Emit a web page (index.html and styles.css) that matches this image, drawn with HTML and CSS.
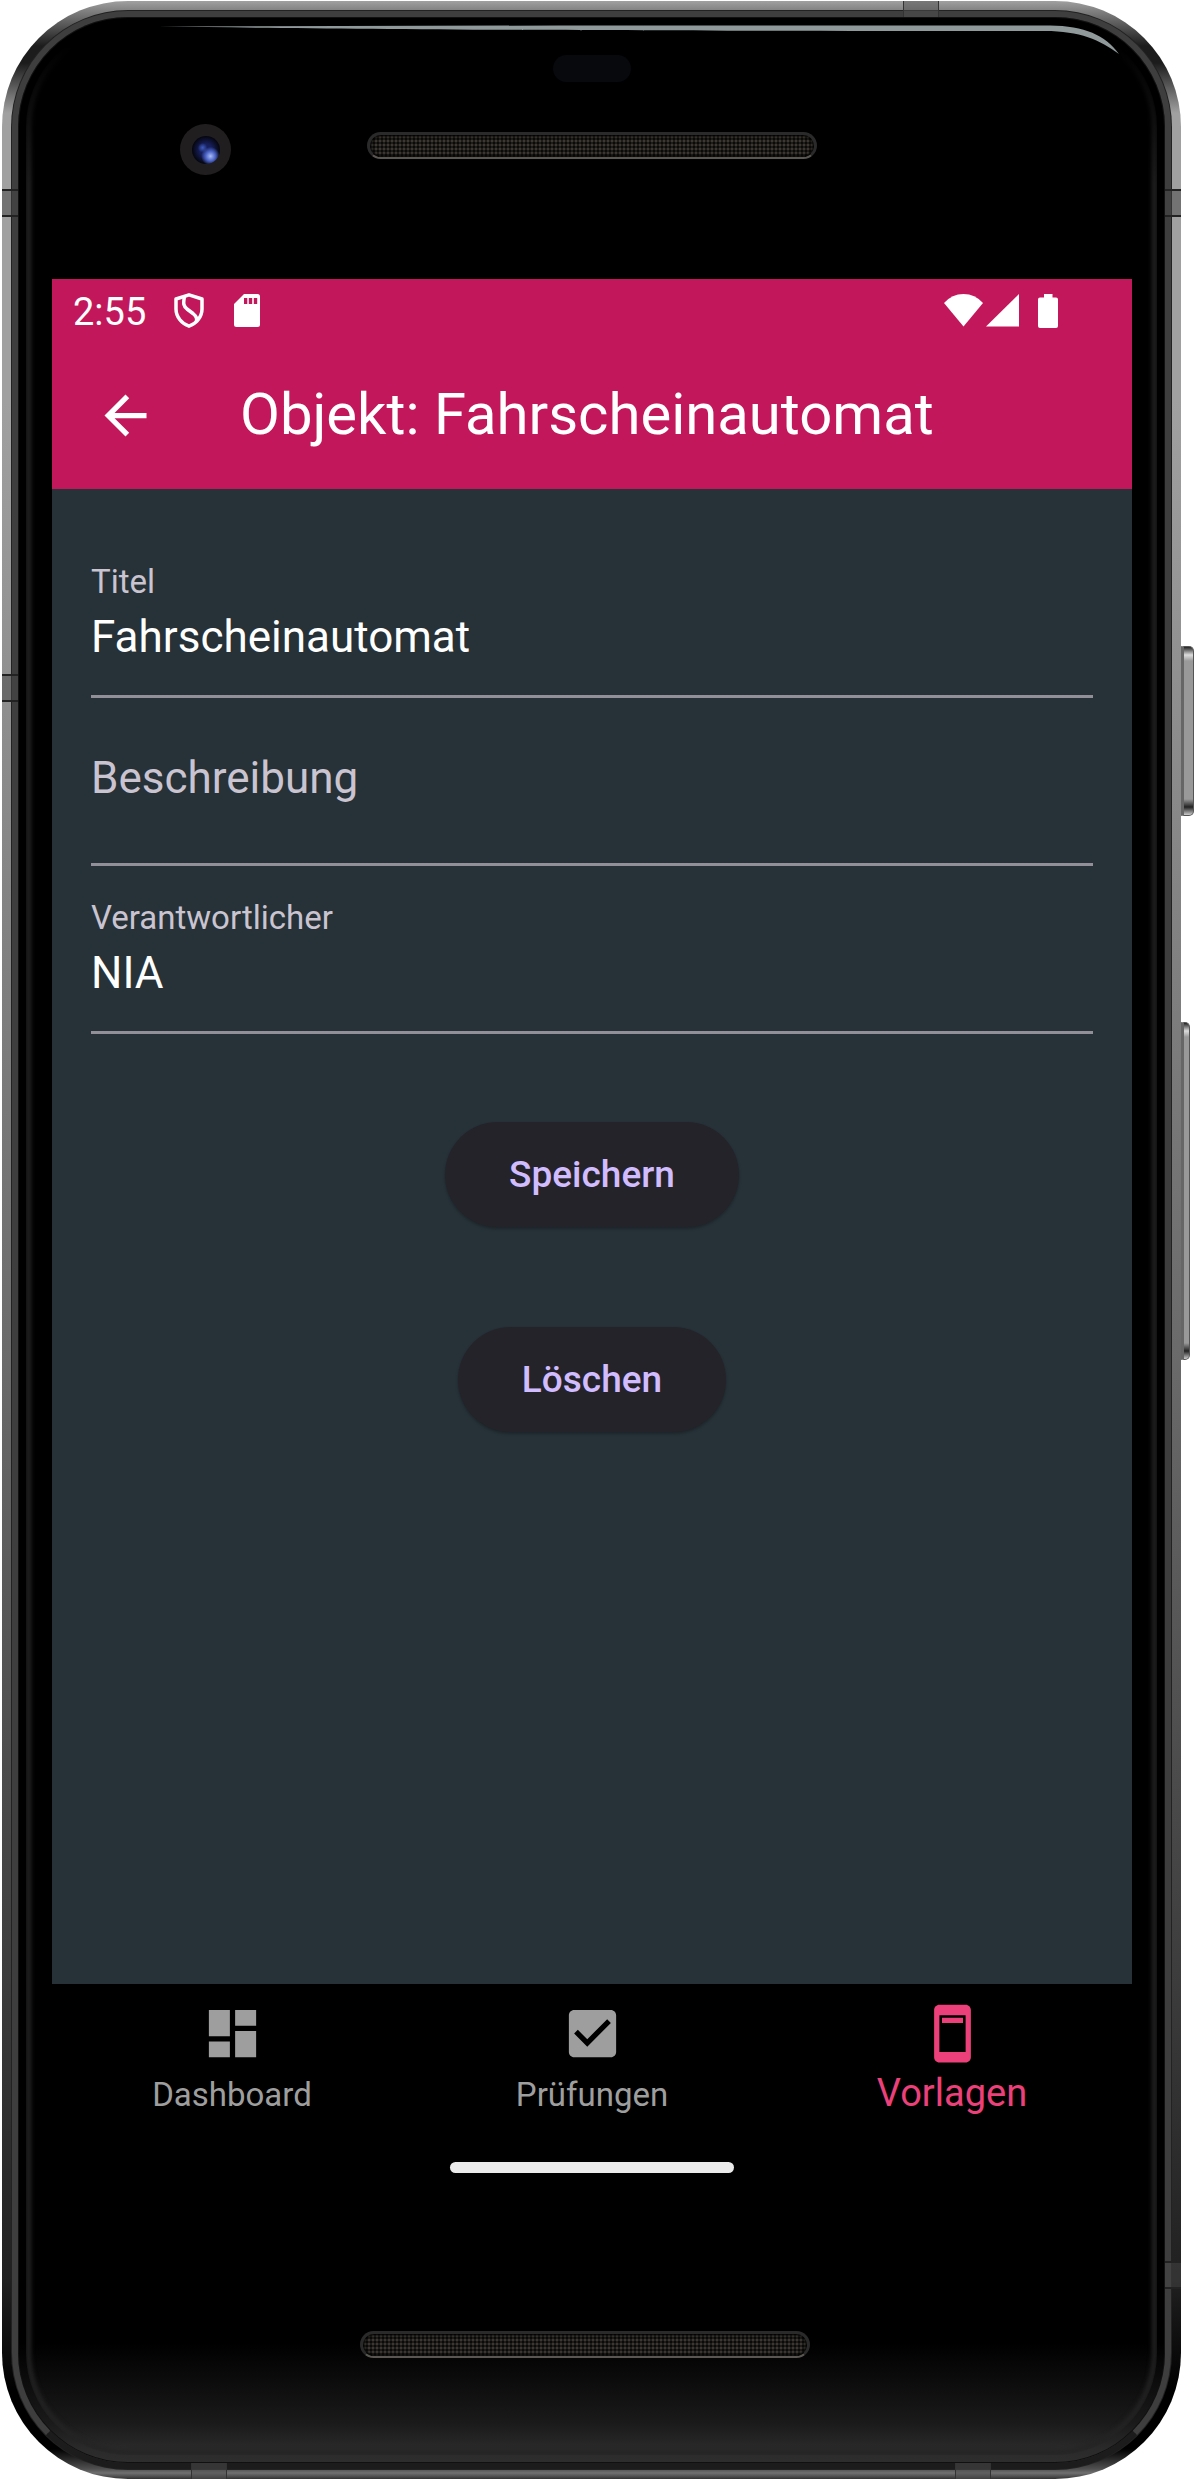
FILE: index.html
```html
<!DOCTYPE html>
<html lang="de">
<head>
  <meta charset="utf-8">
  <meta name="viewport" content="width=device-width, initial-scale=1">
  <title>Objekt: Fahrscheinautomat</title>
  <link rel="stylesheet" href="styles.css">
</head>
<body>
  <div class="phone">
    <span class="side-key side-key-power"></span>
    <span class="side-key side-key-volume"></span>
    <span class="seam seam-left seam-upper"></span>
    <span class="seam seam-left seam-middle"></span>
    <span class="seam seam-right seam-upper"></span>
    <span class="seam seam-right seam-lower"></span>
    <span class="seam-h seam-top"></span>
    <span class="seam-h seam-bottom-left"></span>
    <span class="seam-h seam-bottom-right"></span>

    <div class="glass">
      <svg class="shine" viewBox="0 0 959 30" preserveAspectRatio="none" aria-hidden="true">
        <path fill="#919a9b" d="M0 1.5L400 .5H890C925 1 945 10 959 29C940 15 920 6 885 6C400 6 200 4 0 1.5z"/>
      </svg>

      <div class="forehead">
        <span class="sensor"></span>
        <span class="camera"><span class="lens"></span></span>
        <span class="speaker"></span>
      </div>

      <div class="screen">
        <header class="top">
          <div class="status">
            <span class="clock">2:55</span>
            <svg class="shield" width="30" height="35" viewBox="0 0 30 35" fill="none" stroke="#fff" stroke-width="3.500" stroke-linejoin="round" aria-hidden="true">
              <path d="M15 1.800L28 6V16C28 24 22 31 15 33.200C8 31 2 24 2 16V6z"/>
              <path d="M10.500 3.500C9 11 9.500 13 13 16L19 20.500C22.500 23.500 23 25 22.500 29"/>
            </svg>
            <svg class="sd" width="26" height="33" viewBox="0 0 26 33" aria-hidden="true">
              <path fill="#fff" fill-rule="evenodd" d="M10 0H23.500A2.500 2.500 0 0 1 26 2.500V30.500A2.500 2.500 0 0 1 23.500 33H2.500A2.500 2.500 0 0 1 0 30.500V10zM10 4V10H13.300V4zM14.800 4V10H18.200V4zM19.800 4V10H23.200V4z"/>
            </svg>
            <div class="signals">
              <svg width="39" height="34" viewBox="0 0 39 34" aria-hidden="true"><path fill="#fff" d="M0 9Q8 0 19.500 0T39 9L19.500 32.500z"/></svg>
              <svg width="33" height="34" viewBox="0 0 33 34" aria-hidden="true"><path fill="#fff" d="M33 0V32.500H0z"/></svg>
              <svg class="battery" width="20" height="34" viewBox="0 0 20 34" aria-hidden="true"><path fill="#fff" d="M6 0H14.500V3.500H18A2 2 0 0 1 20 5.500V32A2 2 0 0 1 18 34H2A2 2 0 0 1 0 32V5.500A2 2 0 0 1 2 3.500H6z"/></svg>
            </div>
          </div>
          <div class="appbar">
            <button class="back" type="button" aria-label="Zurück">
              <svg width="63" height="63" viewBox="0 0 24 24" aria-hidden="true"><path fill="#fff" d="M20 11H7.830l5.590-5.590L12 4l-8 8 8 8 1.410-1.410L7.830 13H20v-2z"/></svg>
            </button>
            <h1 class="title">Objekt: Fahrscheinautomat</h1>
          </div>
        </header>

        <main class="content">
          <form class="form">
            <div class="field">
              <label class="label" for="titel">Titel</label>
              <input class="input" id="titel" type="text" value="Fahrscheinautomat">
            </div>
            <div class="field field-empty">
              <label class="label" for="beschreibung">Beschreibung</label>
              <input class="input" id="beschreibung" type="text">
            </div>
            <div class="field">
              <label class="label" for="verantwortlicher">Verantwortlicher</label>
              <input class="input" id="verantwortlicher" type="text" value="NIA">
            </div>
            <div class="actions">
              <button class="button" type="button">Speichern</button>
              <button class="button" type="button">Löschen</button>
            </div>
          </form>
        </main>

        <nav class="nav">
          <a class="tab" href="#dashboard">
            <svg width="63" height="63" viewBox="0 0 24 24" fill="currentColor" aria-hidden="true"><path d="M3 13h8V3H3v10zm0 8h8v-6H3v6zm10 0h8V11h-8v10zm0-18v6h8V3h-8z"/></svg>
            <span class="tab-label">Dashboard</span>
          </a>
          <a class="tab" href="#pruefungen">
            <svg width="63" height="63" viewBox="0 0 24 24" fill="currentColor" aria-hidden="true"><path d="M19 3H5c-1.110 0-2 .9-2 2v14c0 1.100.89 2 2 2h14c1.110 0 2-.9 2-2V5c0-1.100-.89-2-2-2zm-9 14l-5-5 1.410-1.410L10 14.170l7.590-7.590L19 8l-9 9z"/></svg>
            <span class="tab-label">Prüfungen</span>
          </a>
          <a class="tab tab-active" href="#vorlagen" aria-current="page">
            <svg width="63" height="63" viewBox="0 0 24 24" fill="currentColor" aria-hidden="true"><path d="M17 1H7c-1.100 0-2 .9-2 2v18c0 1.100.9 2 2 2h10c1.100 0 2-.9 2-2V3c0-1.100-.9-2-2-2zm0 18H7V5h10v14zM8 6h8v2H8z"/></svg>
            <span class="tab-label">Vorlagen</span>
          </a>
        </nav>
        <div class="gesture"><span class="gesture-bar"></span></div>
      </div>

      <div class="chin"><span class="speaker speaker-low"></span></div>
    </div>
  </div>
</body>
</html>
```

FILE: styles.css
```css
* {
  box-sizing: border-box;
}

body {
  margin: 0;
  background: #fff;
  font-family: Roboto, "Liberation Sans", sans-serif;
  display: flex;
  flex-direction: column;
  min-height: 100vh;
}

/* Device frame */
.phone {
  position: relative;
  flex: 1;
  display: flex;
  flex-direction: column;
  margin: 1px 13px 1px 2px;
  padding: 10px;
  border-radius: 126px;
  background: linear-gradient(180deg,
    #a0a0a0 0, #868686 8px, #1c1c1c 45px, #1c1c1c 62px, #a0a0a0 112px,
    #a0a0a0 400px, #8c8c8c 30%, #6a6a6a 55%, #3c3c3c 80%, #202020 92%,
    #000 calc(100% - 90px), #000 calc(100% - 30px), #505050 calc(100% - 10px), #707070 calc(100% - 6px), #333 100%);
}

.side-key {
  position: absolute;
  left: 100%;
  border-radius: 0 5px 5px 0;
  border: 1px solid #555;
  border-left: 3px solid #666;
  background: linear-gradient(180deg, #222 0, #ddd 8px, #999 14px, #999 calc(100% - 16px), #222 calc(100% - 8px), #ccc 100%);
}

.side-key-power {
  top: 645px;
  width: 13px;
  height: 170px;
}

.side-key-volume {
  top: 1021px;
  width: 9px;
  height: 338px;
}

.seam {
  position: absolute;
  width: 16px;
  height: 28px;
  background: rgba(70, 70, 70, 0.5);
  border: solid #222;
  border-width: 2px 0;
  z-index: 1;
}

.seam-left {
  left: 0;
}

.seam-right {
  right: 0;
}

.seam-upper {
  top: 188px;
}

.seam-middle {
  top: 673px;
}

.seam-lower {
  bottom: 190px;
}

.seam-h {
  position: absolute;
  width: 36px;
  height: 16px;
  background: rgba(80, 80, 80, 0.5);
  border: solid #333;
  border-width: 0 1px;
  z-index: 1;
}

.seam-top {
  top: 0;
  right: 242px;
}

.seam-bottom-left {
  bottom: 0;
  left: 189px;
}

.seam-bottom-right {
  bottom: 0;
  right: 190px;
}

.glass {
  position: relative;
  flex: 1;
  display: flex;
  flex-direction: column;
  padding: 0 33px 0 34px;
  border: 6px solid #3e3e3e;
  border-bottom-color: #1c1c1c;
  border-radius: 116px;
  background:
    linear-gradient(0deg, #2e2e2e 0, #2a2a2a 14px, #1a1a1a 40px, #101010 70px, transparent 120px),
    #000;
  box-shadow: 0 0 0 1px #222, inset 0 0 0 1px #111;
}

/* Soft reflection along the curved glass edge */
.glass::before {
  content: "";
  position: absolute;
  inset: 8px;
  border: 5px solid #242424;
  border-radius: 102px;
  filter: blur(2px);
  mask-image: linear-gradient(180deg, transparent 20px, #000 160px);
  pointer-events: none;
}

.shine {
  position: absolute;
  top: 8px;
  left: 141px;
  width: calc(100% - 187px);
  height: 30px;
}

/* Front camera and earpiece */
.forehead {
  display: grid;
  grid-template-columns: 1fr 450px 1fr;
  grid-template-rows: 27px 51px;
  row-gap: 42px;
  height: 262px;
  padding-top: 38px;
}

.sensor {
  grid-column: 2;
  width: 78px;
  justify-self: center;
  border-radius: 14px;
  background: #08090d;
}

.camera {
  grid-column: 1;
  grid-row: 2;
  display: grid;
  place-items: center;
  width: 51px;
  height: 51px;
  margin-left: 128px;
  border-radius: 50%;
  background: #211e1f;
}

.lens {
  width: 28px;
  height: 28px;
  border-radius: 50%;
  background:
    radial-gradient(circle at 66% 72%, #a9bdf5 0, #4a62c4 18%, transparent 34%),
    radial-gradient(circle at 38% 42%, #3f5cc0 0, transparent 20%),
    radial-gradient(circle, #17205c 30%, #05060f 70%);
}

.speaker {
  grid-column: 2;
  height: 27px;
  margin-top: 8px;
  border: 3px solid #2a2a2b;
  border-bottom: 2px solid #5a5652;
  border-radius: 14px;
  background:
    radial-gradient(circle, #3c3730 1px, transparent 2px) 0 0 / 4px 4px,
    #0b0a09;
  box-shadow: inset 0 0 3px 1px #000;
}

/* App screen */
.screen {
  flex: 1;
  display: flex;
  flex-direction: column;
}

.top {
  background: #c2185b;
  color: #fff;
}

.status {
  display: flex;
  align-items: center;
  height: 63px;
  padding: 0 74px 0 21px;
}

.clock {
  padding-top: 2px;
  font-size: 38px;
  line-height: 42px;
}

.shield {
  margin-left: 28px;
}

.sd {
  margin-left: 30px;
}

.signals {
  display: flex;
  gap: 3px;
  margin-left: auto;
}

.battery {
  margin-left: 16px;
}

.appbar {
  display: flex;
  align-items: center;
  gap: 83px;
  height: 147px;
  padding: 0 42px;
}

.back {
  display: flex;
  padding: 0;
  border: 0;
  background: none;
}

.title {
  margin: 0;
  padding-bottom: 4px;
  font-size: 58px;
  font-weight: 400;
  line-height: 68px;
}

.content {
  flex: 1;
  padding: 41px 39px;
  background: #263238;
}

.field {
  display: grid;
  padding: 31px 0 24px;
  border-bottom: 3px solid #938f99;
}

.label {
  color: #cac4d0;
  font-size: 33px;
  line-height: 42px;
}

.input {
  width: 100%;
  height: 68px;
  padding: 0;
  border: 0;
  outline: 0;
  background: none;
  color: #fff;
  font: 400 44px Roboto, "Liberation Sans", sans-serif;
}

/* The label rests on the empty input's own line */
.field-empty .label,
.field-empty .input {
  grid-area: 1 / 1;
}

.field-empty .label {
  font-size: 44px;
  line-height: 98px;
}

.field-empty .input {
  height: 110px;
}

.actions {
  display: flex;
  flex-direction: column;
  align-items: center;
  gap: 100px;
  padding-top: 88px;
}

.button {
  height: 105px;
  padding: 0 64px;
  border: 0;
  border-radius: 53px;
  background: #25232a;
  color: #d0bcff;
  font: 500 37px Roboto, "Liberation Sans", sans-serif;
  box-shadow: 0 2px 3px rgba(0, 0, 0, 0.25);
}

.nav {
  display: grid;
  grid-template-columns: repeat(3, 1fr);
  background: #000;
}

.tab {
  display: flex;
  flex-direction: column;
  align-items: center;
  padding-top: 18px;
  color: #9e9e9e;
  text-decoration: none;
}

.tab-label {
  font-size: 33px;
  line-height: 60px;
}

.tab-active {
  color: #ec407a;
}

.tab-active .tab-label {
  font-size: 38px;
  line-height: 56px;
}

.gesture {
  display: flex;
  justify-content: center;
  padding-top: 37px;
}

.gesture-bar {
  width: 284px;
  height: 11px;
  border-radius: 6px;
  background: #ebebeb;
}

.chin {
  display: flex;
  justify-content: center;
  padding: 158px 14px 105px 0;
}

.speaker-low {
  width: 450px;
  margin-top: 0;
}
```
